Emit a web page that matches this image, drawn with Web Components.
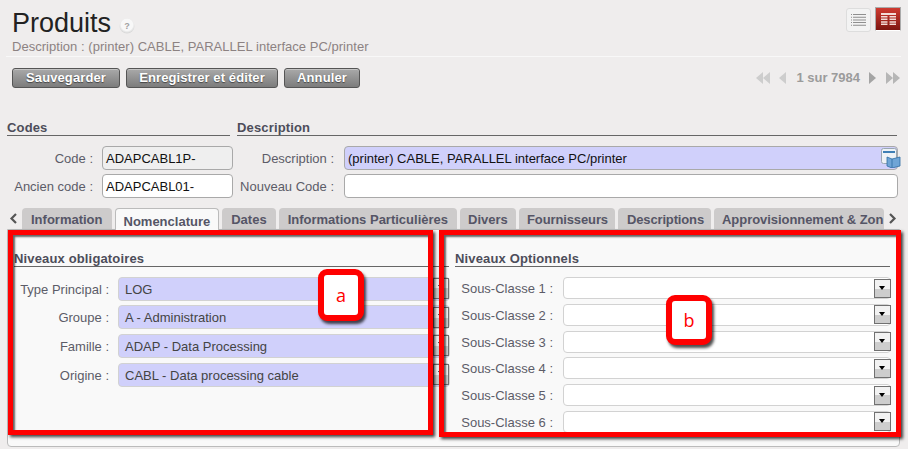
<!DOCTYPE html>
<html lang="fr"><head><meta charset="utf-8"><title>Produits</title>
<style>
html,body{margin:0;padding:0;background:#efeded}
body{font-family:"Liberation Sans",Arial,sans-serif}
</style></head><body>
<app-page></app-page>
<script>
function def(name, css, html){
  class C extends HTMLElement{
    constructor(){super();const s=this.attachShadow({mode:'open'});
      s.innerHTML='<style>'+css+'</style>'+html;}
  }
  customElements.define(name,C);
}
def('pg-button',`:host{display:inline-block;box-sizing:border-box;height:20px;text-align:center;border:1px solid #555;border-radius:3px;
  background:linear-gradient(#a9a9a9,#7c7c7c);color:#fff;font:bold 13px/18px "Liberation Sans",sans-serif;letter-spacing:.1px;text-shadow:0 1px 1px #444;box-shadow:inset 0 1px 0 #c4c4c4;white-space:nowrap}`,'<slot></slot>');
def('section-head',`:host{display:block;box-sizing:border-box;height:16px;border-bottom:1px solid #666;color:#4d4d5a;font:bold 13px/16px "Liberation Sans",sans-serif;letter-spacing:.15px}`,'<slot></slot>');
def('field-label',`:host{display:block;box-sizing:border-box;padding-top:2px;text-align:right;color:#5c5c68;font:13px/22px "Liberation Sans",sans-serif;white-space:nowrap}`,'<slot></slot>');
def('text-box',`:host{display:block;box-sizing:border-box;height:24px;padding:2px 0 0 3px;border:1px solid #a9a9a9;border-radius:4px;background:#fff;color:#111;font:13px/20px "Liberation Sans",sans-serif;white-space:nowrap}
:host([ro]){background:#efefef}:host([req]){background:#d0d0fb}`,'<slot></slot>');
def('combo-box',`:host{display:flex;align-items:center;box-sizing:border-box;height:24px;padding:0 0 0 6px;border:1px solid #d2d2d2;border-radius:4px;background:#fff;color:#444;font:13px/20px "Liberation Sans",sans-serif;white-space:nowrap}
:host([req]){background:#d0d0fb}
span{padding-top:2px}
b{flex:none;position:relative;box-sizing:border-box;width:17px;height:19px;margin:0 -1px 0 auto;border:1px solid #707070;background:linear-gradient(#f2f2f2 0 50%,#cdcdcd 50%)}
:host([req]) b{width:16px;height:21px;margin-right:0}
b::after{content:"";position:absolute;left:4px;top:6px;border:3.5px solid transparent;border-top:4px solid #000;border-bottom:0}`,'<span><slot></slot></span><b></b>');
def('tab-item',`:host{display:block;box-sizing:border-box;flex:none;height:21px;padding:0 9px;border-radius:4px 4px 0 0;background:#cdcbcb;color:#555566;font:bold 13px/24px "Liberation Sans",sans-serif;white-space:nowrap;overflow:hidden}
:host([on]){background:#f9f9f9;border:1px solid #bbb;border-bottom:0;height:22px;padding:0 8px;line-height:25px;position:relative;z-index:1}`,'<slot></slot>');
def('mark-box',`:host{position:absolute;box-sizing:border-box;border:5px solid #f00;box-shadow:2px 2px 3px rgba(0,0,0,.75),inset 2px 2px 2px rgba(0,0,0,.6)}`,'');
def('call-out',`:host{position:absolute;box-sizing:border-box;display:flex;align-items:center;justify-content:center;width:46px;height:52px;border:6px solid #f00;border-radius:9px;background:#fff;color:#f00;font:18px/22px "Open Sans",sans-serif;box-shadow:2px 3px 3px rgba(0,0,0,.7)}`,'<slot></slot>');
def('app-page',`
:host{display:block;position:relative;width:908px;height:449px;overflow:hidden;background:#efeded}
header{display:flex;justify-content:space-between;box-sizing:border-box;height:57px;margin:0 7px 0 6px;padding:7px 0 0 6px;border-bottom:1px solid #f8f8f8}
h1{margin:0;font:normal 27px/32px "Liberation Sans",sans-serif;color:#222;display:flex;align-items:center;gap:8px}
h1 svg{margin-top:5px}
.sub{font:13px/16px "Liberation Sans",sans-serif;color:#8c8282;letter-spacing:.03px}
.views{display:flex;gap:4px;align-items:flex-start}
.v{box-sizing:border-box;width:25px;height:24px;border:1px solid #ddd;border-radius:3px;background:#f3f3f3;display:flex;align-items:center;justify-content:center;margin-top:1px}
.v.r{width:26px;height:24px;margin-top:0;background:linear-gradient(#cf3a30,#7d1510);border:1px solid #aaa;border-bottom-color:#fff;border-radius:0}
.tools{display:flex;justify-content:space-between;align-items:center;height:20px;margin:11px 8px 0 12px}
.btns{display:flex;gap:6px}
.nav{display:flex;align-items:center;color:#9b9b9b;font:bold 13px/16px "Liberation Sans",sans-serif}
.form{display:grid;grid-template-columns:223px 660px;column-gap:7px;margin:32px 0 0 7px}
.fields{display:grid;grid-template-columns:86px 131px;column-gap:9px;row-gap:4px;margin-top:10px}
.fields.d{grid-template-columns:97px 554px;column-gap:10px}
.tb{display:flex;margin-top:10px;height:21px;align-items:flex-start}
.ar{flex:none;display:block;margin-top:5px}
.tabs{display:flex;gap:3px;width:863px;overflow:hidden;height:22px;flex:none;margin:0 3px 0 4px}
.panel{box-sizing:border-box;height:218px;margin:0 8px 0 7px;border:1px solid #bbb;border-radius:0 0 4px 4px;background:#f9f9f9;display:grid;grid-template-columns:435px 435px;column-gap:6px;align-content:start;padding:21px 0 0 6px}
.rows{display:grid;row-gap:4.6px;margin-top:9.8px;grid-template-columns:95px 332px;column-gap:9px}
.rows.o{row-gap:4.8px;margin-top:10px;grid-template-columns:98px 328px;column-gap:10px}
.rows.o>*{height:22px}
.rows.o field-label{line-height:20px}
`,`
<header>
 <div>
  <h1>Produits <svg width="16" height="16" viewBox="0 0 16 16"><defs><radialGradient id="h" cx=".5" cy=".42" r=".55"><stop offset=".7" stop-color="#f8f8f8"/><stop offset="1" stop-color="#d8d8d8"/></radialGradient></defs><circle cx="8" cy="8" r="7.500" fill="url(#h)"/><text x="8" y="11" text-anchor="middle" font-family="Liberation Sans" font-weight="bold" font-size="9" fill="#a0a0a0">?</text></svg></h1>
  <div class="sub">Description : (printer) CABLE, PARALLEL interface PC/printer</div>
 </div>
 <div class="views">
  <div class="v"><svg width="15" height="12" viewBox="0 0 15 12" fill="#8f8f8f"><path d="M0 0h1v1H0zM2 0h13v1H2zM0 2.700h1v1H0zM2 2.700h13v1H2zM0 5.400h1v1H0zM2 5.400h13v1H2zM0 8.100h1v1H0zM2 8.100h13v1H2zM0 10.800h1v1H0zM2 10.800h13v1H2z"/></svg></div>
  <div class="v r"><svg width="15" height="12" viewBox="0 0 15 12" fill="#f3dcd8"><path d="M0 0h15v2H0zM0 3h6.500v1.500H0zM8.500 3H15v1.500H8.500zM0 5.600h6.500v1.500H0zM8.500 5.600H15v1.500H8.500zM0 8.200h6.500v1.500H0zM8.500 8.200H15v1.500H8.500zM0 10.600h6.500V12H0zM8.500 10.600H15V12H8.500z"/></svg></div>
 </div>
</header>
<div class="tools">
 <div class="btns"><pg-button style="width:108px">Sauvegarder</pg-button><pg-button style="width:152px">Enregistrer et éditer</pg-button><pg-button style="width:76px">Annuler</pg-button></div>
 <div class="nav">
  <svg width="14" height="12" viewBox="0 0 14 12" fill="#cdcdcd"><path d="M7 0v12L0 6zM14 0v12L7 6z"/></svg>
  <svg width="8" height="12" viewBox="0 0 8 12" fill="#cdcdcd" style="margin-left:9px"><path d="M7 0v12L0 6z"/></svg>
  <span style="margin-left:9px">1 sur 7984</span>
  <svg width="8" height="12" viewBox="0 0 8 12" fill="#a4a4a4" style="margin-left:9px"><path d="M0 0v12l7-6z"/></svg>
  <svg width="14" height="12" viewBox="0 0 14 12" fill="#b6b6b6" style="margin-left:9px"><path d="M0 0v12l7-6zM7 0v12l7-6z"/></svg>
 </div>
</div>
<div class="form">
 <div>
  <section-head>Codes</section-head>
  <div class="fields">
   <field-label>Code :</field-label><text-box ro>ADAPCABL1P-</text-box>
   <field-label>Ancien code :</field-label><text-box>ADAPCABL01-</text-box>
  </div>
 </div>
 <div>
  <section-head>Description</section-head>
  <div class="fields d">
   <field-label>Description :</field-label>
   <text-box req style="position:relative">(printer) CABLE, PARALLEL interface PC/printer
    <svg style="position:absolute;right:-4px;top:1px" width="20" height="20" viewBox="0 0 20 20"><rect x=".5" y=".5" width="15" height="15" rx="2" fill="#eef2f6" stroke="#9aa7b3"/><rect x="2" y="3" width="12" height="2" fill="#3f7fb5"/><path d="M6 9l5 2 8-2v9l-8 2-5-2z" fill="#6fa5d6" stroke="#2f6da3" stroke-width=".8"/><path d="M11 11v9" stroke="#2f6da3" stroke-width=".8"/></svg>
   </text-box>
   <field-label>Nouveau Code :</field-label><text-box></text-box>
  </div>
 </div>
</div>
<div class="tb">
 <svg class="ar" width="9" height="11" viewBox="0 0 9 11" style="margin-left:9px"><path d="M7 1L2.500 5.500 7 10" fill="none" stroke="#555" stroke-width="2.200"/></svg>
 <div class="tabs">
  <tab-item>Information</tab-item><tab-item on>Nomenclature</tab-item><tab-item>Dates</tab-item><tab-item>Informations Particulières</tab-item><tab-item style="width:56px;padding:0 0 0 8px">Divers</tab-item><tab-item style="width:96px;padding:0 0 0 8px;letter-spacing:-.12px">Fournisseurs</tab-item><tab-item style="width:93px;padding:0 0 0 9px;letter-spacing:-.15px">Descriptions</tab-item><tab-item style="width:170px;padding:0 0 0 8px;letter-spacing:-.05px">Approvisionnement &amp; Zon</tab-item>
 </div>
 <svg class="ar" width="9" height="11" viewBox="0 0 9 11"><path d="M2 1l4.500 4.500L2 10" fill="none" stroke="#555" stroke-width="2.200"/></svg>
</div>
<div class="panel">
 <div>
  <section-head>Niveaux obligatoires</section-head>
  <div class="rows">
   <field-label>Type Principal :</field-label><combo-box req>LOG</combo-box>
   <field-label>Groupe :</field-label><combo-box req>A - Administration</combo-box>
   <field-label>Famille :</field-label><combo-box req>ADAP - Data Processing</combo-box>
   <field-label>Origine :</field-label><combo-box req>CABL - Data processing cable</combo-box>
  </div>
 </div>
 <div>
  <section-head>Niveaux Optionnels</section-head>
  <div class="rows o">
   <field-label>Sous-Classe 1 :</field-label><combo-box></combo-box>
   <field-label>Sous-Classe 2 :</field-label><combo-box></combo-box>
   <field-label>Sous-Classe 3 :</field-label><combo-box></combo-box>
   <field-label>Sous-Classe 4 :</field-label><combo-box></combo-box>
   <field-label>Sous-Classe 5 :</field-label><combo-box></combo-box>
   <field-label>Sous-Classe 6 :</field-label><combo-box></combo-box>
  </div>
 </div>
</div>
<mark-box style="left:8px;top:230px;width:425px;height:205px"></mark-box>
<mark-box style="left:439px;top:230px;width:462px;height:207px"></mark-box>
<call-out style="left:318px;top:269px">a</call-out>
<call-out style="left:666px;top:295px;height:50px">b</call-out>
`);
</script>
</body></html>
